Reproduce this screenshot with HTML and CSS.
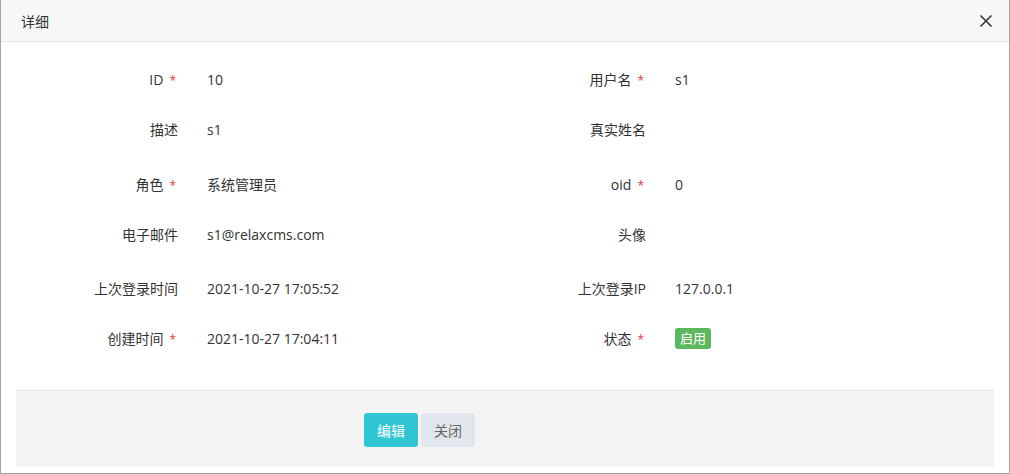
FILE: index.html
```html
<!DOCTYPE html>
<html lang="zh">
<head>
<meta charset="utf-8">
<title>详细</title>
<link rel="stylesheet" href="styles.css">
</head>
<body>
<div class="modal">
  <div class="modal-header">
    <span class="modal-title">详细</span>
    <span class="close" aria-label="关闭">
      <svg width="14" height="14" viewBox="0 0 14 14"><path d="M1.5 1.5 L12.5 12.5 M12.5 1.5 L1.5 12.5" stroke="#333" stroke-width="1.5" fill="none"/></svg>
    </span>
  </div>
  <div class="modal-body">
    <div class="fields">
      <div class="field"><div class="label">ID<span class="req">*</span></div><div class="value">10</div></div>
      <div class="field"><div class="label">用户名<span class="req">*</span></div><div class="value">s1</div></div>
      <div class="field"><div class="label">描述</div><div class="value">s1</div></div>
      <div class="field"><div class="label">真实姓名</div><div class="value"></div></div>
      <div class="field"><div class="label">角色<span class="req">*</span></div><div class="value">系统管理员</div></div>
      <div class="field"><div class="label">oid<span class="req">*</span></div><div class="value">0</div></div>
      <div class="field"><div class="label">电子邮件</div><div class="value">s1@relaxcms.com</div></div>
      <div class="field"><div class="label">头像</div><div class="value"></div></div>
      <div class="field"><div class="label">上次登录时间</div><div class="value">2021-10-27 17:05:52</div></div>
      <div class="field"><div class="label">上次登录IP</div><div class="value">127.0.0.1</div></div>
      <div class="field"><div class="label">创建时间<span class="req">*</span></div><div class="value">2021-10-27 17:04:11</div></div>
      <div class="field"><div class="label">状态<span class="req">*</span></div><div class="value"><span class="badge">启用</span></div></div>
    </div>
    <div class="footer">
      <button class="btn btn-primary">编辑</button>
      <button class="btn btn-default">关闭</button>
    </div>
  </div>
</div>
</body>
</html>
```
FILE: styles.css
```css
html, body {
  margin: 0;
  padding: 0;
  background: #fff;
}
body {
  font-family: "Open Sans", "Noto Sans CJK SC", sans-serif;
  font-size: 14px;
  color: #333;
}
.modal {
  box-sizing: border-box;
  width: 1010px;
  height: 474px;
  border: 1px solid #a3a3a3;
  border-top: none;
  background: #fff;
}
.modal-header {
  height: 41px;
  background: #f7f7f7;
  border-bottom: 1px solid #e5e5e5;
  display: flex;
  align-items: center;
  justify-content: space-between;
  padding: 0 16px 0 20px;
}
.modal-title {
  font-size: 14px;
  color: #333;
}
.close {
  display: flex;
  align-items: center;
  justify-content: center;
  width: 14px;
  height: 14px;
}
.modal-body {
  padding: 12px 15px 0 15px;
}
.fields {
  display: grid;
  grid-template-columns: 468px 468px;
  grid-template-rows: 50px 55px 50px 54px 50px 51px;
  align-items: start;
}
.field {
  display: flex;
  align-items: center;
  height: 50px;
}
.label {
  width: 162px;
  text-align: right;
  flex: none;
  white-space: nowrap;
}
.req {
  color: #e53935;
  margin-left: 6px;
  margin-right: 2px;
  font-size: 12px;
}
.value {
  margin-left: 29px;
  white-space: nowrap;
}
.badge {
  display: inline-block;
  background: #5cb85c;
  color: #fff;
  font-size: 13px;
  line-height: 21px;
  padding: 0 5px;
  border-radius: 3px;
}
.footer {
  margin-top: 26px;
  height: 77px;
  box-sizing: border-box;
  background: #f4f4f4;
  border-top: 1px solid #e8e8e8;
  display: flex;
  align-items: center;
  gap: 3px;
  padding: 2px 0 0 348px;
}
.btn {
  height: 34px;
  padding: 0 13px;
  border: none;
  border-radius: 3px;
  font-family: "Open Sans", "Noto Sans CJK SC", sans-serif;
  font-size: 14px;
  cursor: pointer;
}
.btn-primary {
  background: #31c6d3;
  color: #fff;
}
.btn-default {
  background: #e1e5ec;
  color: #666;
}
```
